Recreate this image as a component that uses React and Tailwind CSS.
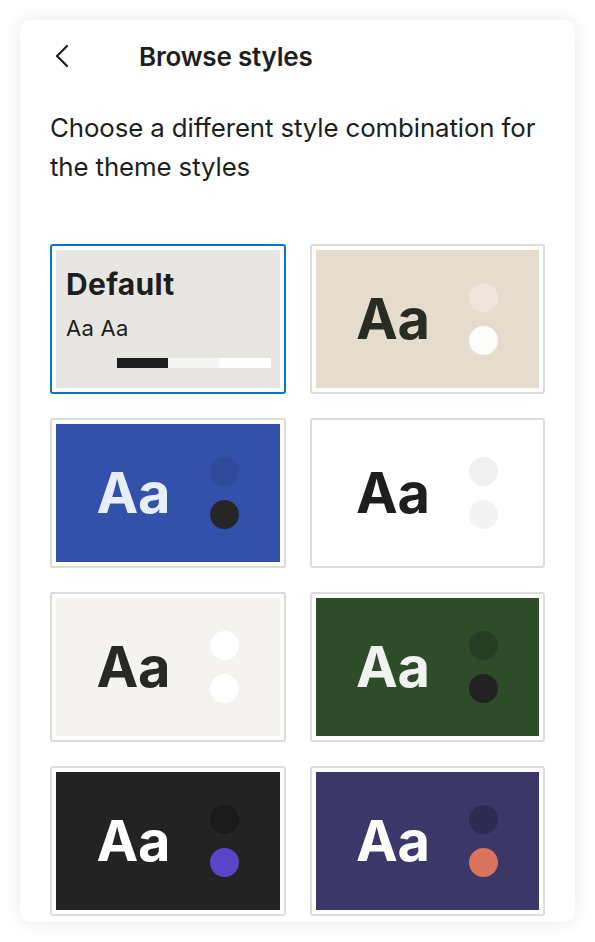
import { useState } from "react";

const styles = [
  { id: "default" },
  { id: "beige", bg: "bg-[#e6dccd]", text: "text-[#282c25]", dots: ["bg-[#eee5dc]", "bg-[#fcfcfb]"] },
  { id: "blue", bg: "bg-[#3350ab]", text: "text-[#e8edfa]", dots: ["bg-[#2f4a9d]", "bg-[#262626]"] },
  { id: "white", bg: "bg-white", text: "text-[#1e1e1e]", dots: ["bg-[#f0f0f0]", "bg-[#f3f3f3]"] },
  { id: "cream", bg: "bg-[#f4f3f0]", text: "text-[#262a23]", dots: ["bg-white", "bg-white"] },
  { id: "green", bg: "bg-[#2e4b2a]", text: "text-[#f2f2f2]", dots: ["bg-[#253d22]", "bg-[#222222]"] },
  { id: "dark", bg: "bg-[#232323]", text: "text-white", dots: ["bg-[#1a1a1a]", "bg-[#5b44c7]"] },
  { id: "indigo", bg: "bg-[#3b3768]", text: "text-white", dots: ["bg-[#2e2b52]", "bg-[#db735c]"] }
];

const DefaultPreview = () => (
  <div className="flex h-full flex-col bg-[#e8e6e3] pl-[10px] pr-[9px] pt-[16px] text-left">
    <div className="text-[30px] font-bold leading-[36px] tracking-[0.3px] text-[#1e1e1e]">Default</div>
    <div className="mt-[12px] text-[22px] leading-[28px] tracking-[0.3px] text-[#1e1e1e]">Aa Aa</div>
    <div className="mt-[16px] flex justify-end">
      <span className="h-[10px] w-[51px] bg-[#1e1e1e]" />
      <span className="h-[10px] w-[51px] bg-[#f5f5f4]" />
      <span className="h-[10px] w-[52px] bg-white" />
    </div>
  </div>
);

const Preview = ({ item }) => (
  <div className={`flex h-full items-center justify-center gap-[40px] ${item.bg}`}>
    <span className={`text-[56px] font-bold leading-none tracking-[-0.5px] ${item.text}`}>Aa</span>
    <div className="flex flex-col gap-[14px]">
      <span className={`block h-[29px] w-[29px] rounded-full ${item.dots[0]}`} />
      <span className={`block h-[29px] w-[29px] rounded-full ${item.dots[1]}`} />
    </div>
  </div>
);

export default function App() {
  const [selected, setSelected] = useState("default");

  return (
    <div className="min-h-[942px] bg-white pl-[20px] pt-[20px]" style={{ fontFamily: "Inter, 'Noto Sans', sans-serif" }}>
      <div className="h-[902px] w-[555px] overflow-hidden rounded-[10px] bg-white shadow-[0_0_18px_rgba(0,0,0,0.09)]">
        <header className="mt-[16px] flex h-[40px] items-center pl-[32px]">
          <button className="flex h-[40px] w-[20px] items-center justify-center text-[#1e1e1e]">
            <svg width="14" height="24" viewBox="0 0 14 24" fill="none">
              <path d="M12 2 L2 12 L12 22" stroke="currentColor" strokeWidth="2.2" strokeLinecap="round" strokeLinejoin="round" />
            </svg>
          </button>
          <h1 className="ml-[67px] text-[26px] font-semibold tracking-[-0.2px] text-[#1e1e1e]">Browse styles</h1>
        </header>

        <p className="mt-[32px] px-[30px] text-[25.8px] leading-[39px] tracking-[-0.1px] text-[#1e1e1e]">
          Choose a different style combination for the theme styles
        </p>

        <div className="mt-[58px] grid grid-cols-2 gap-x-[24px] gap-y-[24px] px-[30px]">
          {styles.map((item) => (
            <button
              key={item.id}
              onClick={() => setSelected(item.id)}
              className={`h-[150px] rounded-[3px] border-2 p-[4px] ${selected === item.id ? "border-[#0675c4]" : "border-[#dddddd]"}`}
            >
              {item.id === "default" ? <DefaultPreview /> : <Preview item={item} />}
            </button>
          ))}
        </div>
      </div>
    </div>
  );
}
